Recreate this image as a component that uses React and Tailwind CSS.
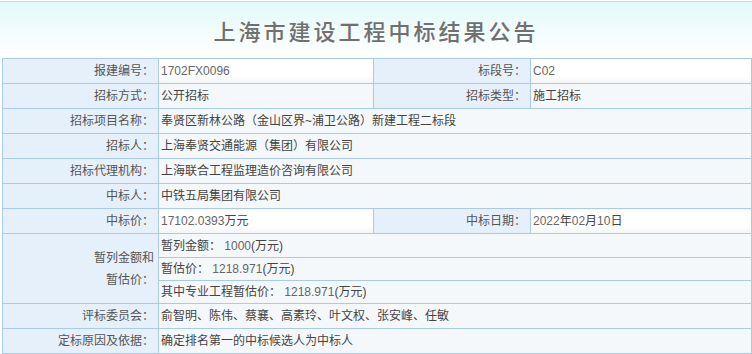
import React from "react"

const font = { fontFamily: '"Liberation Sans", "Noto Sans CJK SC", sans-serif' }

const Label = ({ children, className = "", ...rest }) => (
  <td {...rest} className={`border border-[#a9cbe6] bg-[#e6f0fa] text-right pr-[4px] text-[#555] ${className}`}>
    {children}
  </td>
)

const Value = ({ children, colSpan, white, className = "" }) => (
  <td
    colSpan={colSpan}
    className={`border border-[#a9cbe6] pl-[2px] text-[#444] ${white ? "bg-gradient-to-b from-white from-70% to-[#f1f5f7]" : "bg-[#f4f8fa]"} ${className}`}
  >
    {children}
  </td>
)

const Num = ({ children }) => (
  <span className="text-[12px] text-[#666]" style={{ fontFamily: '"Liberation Sans", Arial, sans-serif' }}>
    {children}
  </span>
)

export default function App() {
  return (
    <div className="w-[752px] h-[354px] bg-white overflow-hidden" style={font}>
      <div className="h-[57px] border-t border-[#c9d6e3] mt-[1px] bg-gradient-to-b from-[#e3f9fa] to-white flex justify-center pt-[13px]">
        <h1
          className="text-[22px] leading-[30px] tracking-[3px] text-[#707070] font-medium"
          style={{ fontFamily: '"Noto Sans CJK SC", sans-serif' }}
        >
          上海市建设工程中标结果公告
        </h1>
      </div>
      <table className="ml-[2px] w-[749px] border-collapse table-fixed text-[12px] leading-[16px]">
        <colgroup>
          <col className="w-[156px]" />
          <col className="w-[215px]" />
          <col className="w-[157px]" />
          <col className="w-[221px]" />
        </colgroup>
        <tbody>
          <tr className="h-[25px]">
            <Label>报建编号：</Label>
            <Value white><Num>1702FX0096</Num></Value>
            <Label>标段号：</Label>
            <Value white><Num>C02</Num></Value>
          </tr>
          <tr className="h-[25px]">
            <Label>招标方式：</Label>
            <Value>公开招标</Value>
            <Label>招标类型：</Label>
            <Value>施工招标</Value>
          </tr>
          <tr className="h-[25px]">
            <Label>招标项目名称：</Label>
            <Value colSpan={3}>奉贤区新林公路（金山区界~浦卫公路）新建工程二标段</Value>
          </tr>
          <tr className="h-[25px]">
            <Label>招标人：</Label>
            <Value colSpan={3}>上海奉贤交通能源（集团）有限公司</Value>
          </tr>
          <tr className="h-[25px]">
            <Label>招标代理机构：</Label>
            <Value colSpan={3}>上海联合工程监理造价咨询有限公司</Value>
          </tr>
          <tr className="h-[25px]">
            <Label>中标人：</Label>
            <Value colSpan={3}>中铁五局集团有限公司</Value>
          </tr>
          <tr className="h-[25px]">
            <Label>中标价：</Label>
            <Value white><Num>17102.0393</Num>万元</Value>
            <Label>中标日期：</Label>
            <Value white><Num>2022</Num>年<Num>02</Num>月<Num>10</Num>日</Value>
          </tr>
          <tr className="h-[24px]">
            <Label className="leading-[22px]" rowSpan={3}>
              暂列金额和<br />暂估价：
            </Label>
            <Value colSpan={3}>暂列金额： <Num>1000</Num>(万元)</Value>
          </tr>
          <tr className="h-[23px]">
            <Value colSpan={3}>暂估价： <Num>1218.971</Num>(万元)</Value>
          </tr>
          <tr className="h-[23px]">
            <Value colSpan={3}>其中专业工程暂估价： <Num>1218.971</Num>(万元)</Value>
          </tr>
          <tr className="h-[25px]">
            <Label>评标委员会：</Label>
            <Value colSpan={3}>俞智明、陈伟、蔡襄、高素玲、叶文权、张安峰、任敏</Value>
          </tr>
          <tr className="h-[25px]">
            <Label>定标原因及依据：</Label>
            <Value colSpan={3}>确定排名第一的中标候选人为中标人</Value>
          </tr>
        </tbody>
      </table>
    </div>
  )
}
